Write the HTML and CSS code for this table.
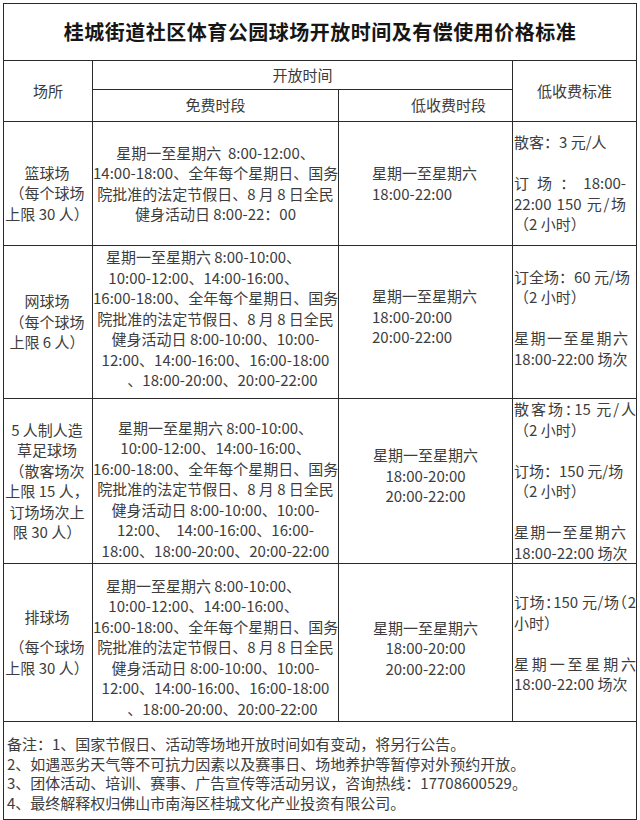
FILE: index.html
```html
<!DOCTYPE html>
<html lang="zh-CN">
<head>
<meta charset="utf-8">
<title>桂城街道社区体育公园球场开放时间及有偿使用价格标准</title>
<link rel="stylesheet" href="styles.css">
</head>
<body>
<table class="sheet">
  <colgroup>
    <col class="c-place">
    <col class="c-free">
    <col class="c-low">
    <col class="c-price">
  </colgroup>
  <tr class="r-title">
    <th colspan="4" class="title">桂城街道社区体育公园球场开放时间及有偿使用价格标准</th>
  </tr>
  <tr class="r-h1">
    <td rowspan="2" class="head">场所</td>
    <td colspan="2" class="head">开放时间</td>
    <td rowspan="2" class="head">低收费标准</td>
  </tr>
  <tr class="r-h2">
    <td class="head">免费时段</td>
    <td class="head head-low">低收费时段</td>
  </tr>

  <tr class="r-1">
    <td class="place">
      <div class="box place-down">
        <div>篮球场</div>
        <div>（每个球场</div>
        <div>上限 30 人）</div>
      </div>
    </td>
    <td class="free">
      <div class="box">
        <div>星期一至星期六&nbsp; 8:00-12:00、</div>
        <div>14:00-18:00、全年每个星期日、国务</div>
        <div>院批准的法定节假日、8 月 8 日全民</div>
        <div>健身活动日 8:00-22：00</div>
      </div>
    </td>
    <td class="low low-left">
      <div class="box">
        <div>星期一至星期六</div>
        <div>18:00-22:00</div>
      </div>
    </td>
    <td class="price">
      <div class="box">
        <div>散客：3 元/人</div>
        <div class="blank"></div>
        <div class="j j-short">订 场 ： 18:00-</div>
        <div class="j j-short">22:00 150 元/场</div>
        <div>（2 小时）</div>
      </div>
    </td>
  </tr>

  <tr class="r-2">
    <td class="place">
      <div class="box">
        <div>网球场</div>
        <div>（每个球场</div>
        <div>上限 6 人）</div>
      </div>
    </td>
    <td class="free">
      <div class="box free-up">
        <div class="shift-l">星期一至星期六 8:00-10:00、</div>
        <div class="shift-l">10:00-12:00、14:00-16:00、</div>
        <div>16:00-18:00、全年每个星期日、国务</div>
        <div>院批准的法定节假日、8 月 8 日全民</div>
        <div>健身活动日 8:00-10:00、10:00-</div>
        <div>12:00、14:00-16:00、16:00-18:00</div>
        <div class="shift-r">、18:00-20:00、20:00-22:00</div>
      </div>
    </td>
    <td class="low low-left">
      <div class="box low-up">
        <div>星期一至星期六</div>
        <div>18:00-20:00</div>
        <div>20:00-22:00</div>
      </div>
    </td>
    <td class="price">
      <div class="box price-up">
        <div>订全场：60 元/场</div>
        <div>（2 小时）</div>
        <div class="blank"></div>
        <div class="j j-mid">星期一至星期六</div>
        <div>18:00-22:00 场次</div>
      </div>
    </td>
  </tr>

  <tr class="r-3">
    <td class="place">
      <div class="box">
        <div>5 人制人造</div>
        <div>草足球场</div>
        <div>（散客场次</div>
        <div>上限 15 人，</div>
        <div>订场场次上</div>
        <div>限 30 人）</div>
      </div>
    </td>
    <td class="free">
      <div class="box free-down">
        <div>星期一至星期六 8:00-10:00、</div>
        <div>10:00-12:00、14:00-16:00、</div>
        <div>16:00-18:00、全年每个星期日、国务</div>
        <div>院批准的法定节假日、8 月 8 日全民</div>
        <div>健身活动日 8:00-10:00、10:00-</div>
        <div>12:00、&nbsp; 14:00-16:00、16:00-</div>
        <div>18:00、18:00-20:00、20:00-22:00</div>
      </div>
    </td>
    <td class="low">
      <div class="box low-up">
        <div>星期一至星期六</div>
        <div>18:00-20:00</div>
        <div>20:00-22:00</div>
      </div>
    </td>
    <td class="price">
      <div class="box">
        <div class="j tight">散客场：15 元/人</div>
        <div>（2 小时）</div>
        <div class="blank"></div>
        <div>订场：150 元/场</div>
        <div>（2 小时）</div>
        <div class="blank"></div>
        <div class="j j-short">星期一至星期六</div>
        <div>18:00-22:00 场次</div>
      </div>
    </td>
  </tr>

  <tr class="r-4">
    <td class="place">
      <div class="box">
        <div>排球场</div>
        <div class="gap">（每个球场</div>
        <div>上限 30 人）</div>
      </div>
    </td>
    <td class="free">
      <div class="box free-down-s">
        <div class="shift-l">星期一至星期六 8:00-10:00、</div>
        <div class="shift-l">10:00-12:00、14:00-16:00、</div>
        <div>16:00-18:00、全年每个星期日、国务</div>
        <div>院批准的法定节假日、8 月 8 日全民</div>
        <div>健身活动日 8:00-10:00、10:00-</div>
        <div>12:00、14:00-16:00、16:00-18:00</div>
        <div class="shift-r">、18:00-20:00、20:00-22:00</div>
      </div>
    </td>
    <td class="low">
      <div class="box low-down">
        <div>星期一至星期六</div>
        <div>18:00-20:00</div>
        <div>20:00-22:00</div>
      </div>
    </td>
    <td class="price">
      <div class="box price-down">
        <div class="j tight">订场：150 元/场（2</div>
        <div>小时）</div>
        <div class="blank"></div>
        <div class="j">星期一至星期六</div>
        <div>18:00-22:00 场次</div>
      </div>
    </td>
  </tr>

  <tr class="r-notes">
    <td colspan="4" class="notes">
      <div class="box notes-box">
        <div>备注：1、国家节假日、活动等场地开放时间如有变动，将另行公告。</div>
        <div>2、如遇恶劣天气等不可抗力因素以及赛事日、场地养护等暂停对外预约开放。</div>
        <div>3、团体活动、培训、赛事、广告宣传等活动另议，咨询热线：17708600529。</div>
        <div>4、最终解释权归佛山市南海区桂城文化产业投资有限公司。</div>
      </div>
    </td>
  </tr>
</table>
</body>
</html>
```

FILE: styles.css
```css
html, body {
  margin: 0;
  padding: 0;
  background: #ffffff;
}

body {
  font-family: "Noto Sans CJK SC", "Noto Sans", sans-serif;
  color: #3d3d3d;
}

.sheet {
  margin: 3px 0 0 3px;
  border-collapse: collapse;
  table-layout: fixed;
  width: 634px;
}

.c-place { width: 89px; }
.c-free { width: 246px; }
.c-low { width: 174px; }
.c-price { width: 124px; }

th,
td {
  border: 1px solid #2a2a2a;
  padding: 0;
  font-size: 15px;
  line-height: 20.5px;
  font-weight: normal;
  vertical-align: middle;
  white-space: nowrap;
}

.r-title th { height: 56px; }
.r-h1 td { height: 28px; }
.r-h2 td { height: 31px; }
.r-1 td { height: 123px; }
.r-2 td { height: 152px; }
.r-3 td { height: 163px; }
.r-4 td { height: 157px; }
.r-notes td { height: 97px; }

.title {
  font-size: 20px;
  font-weight: bold;
  letter-spacing: 0.5px;
  color: #161616;
  text-align: center;
}

.head {
  text-align: center;
  color: #3a3a3a;
}

.head-low {
  padding-left: 46px;
}

.place {
  text-align: center;
  padding-right: 2px;
}

.place-down {
  padding-top: 20px;
}

.place .gap {
  margin-top: 10px;
}

.free {
  text-align: center;
}

.free-up {
  padding-bottom: 6px;
}

.free-down {
  padding-top: 17px;
}

.free-down-s {
  padding-top: 10px;
}

.shift-l {
  padding-right: 24px;
}

.shift-r {
  padding-left: 14px;
}

.low {
  text-align: center;
}

.low-left {
  text-align: left;
  padding-left: 33px;
}

.low-up {
  padding-bottom: 10px;
}

.low-down {
  padding-top: 12px;
}

.price {
  text-align: left;
  padding-left: 1px;
}

.price-up {
  padding-bottom: 8px;
}

.price-down {
  padding-top: 2px;
}

.price .blank {
  height: 20.5px;
}

.price .j {
  text-align: justify;
  text-align-last: justify;
}

.price .tight {
  font-feature-settings: "halt";
}

.price .j-short {
  margin-right: 10px;
}

.price .j-mid {
  margin-right: 8px;
}

.notes {
  text-align: left;
  vertical-align: top;
  border-top-color: #8a8a8a;
}

.notes-box {
  padding: 12px 0 0 3px;
  line-height: 19.5px;
}
```
